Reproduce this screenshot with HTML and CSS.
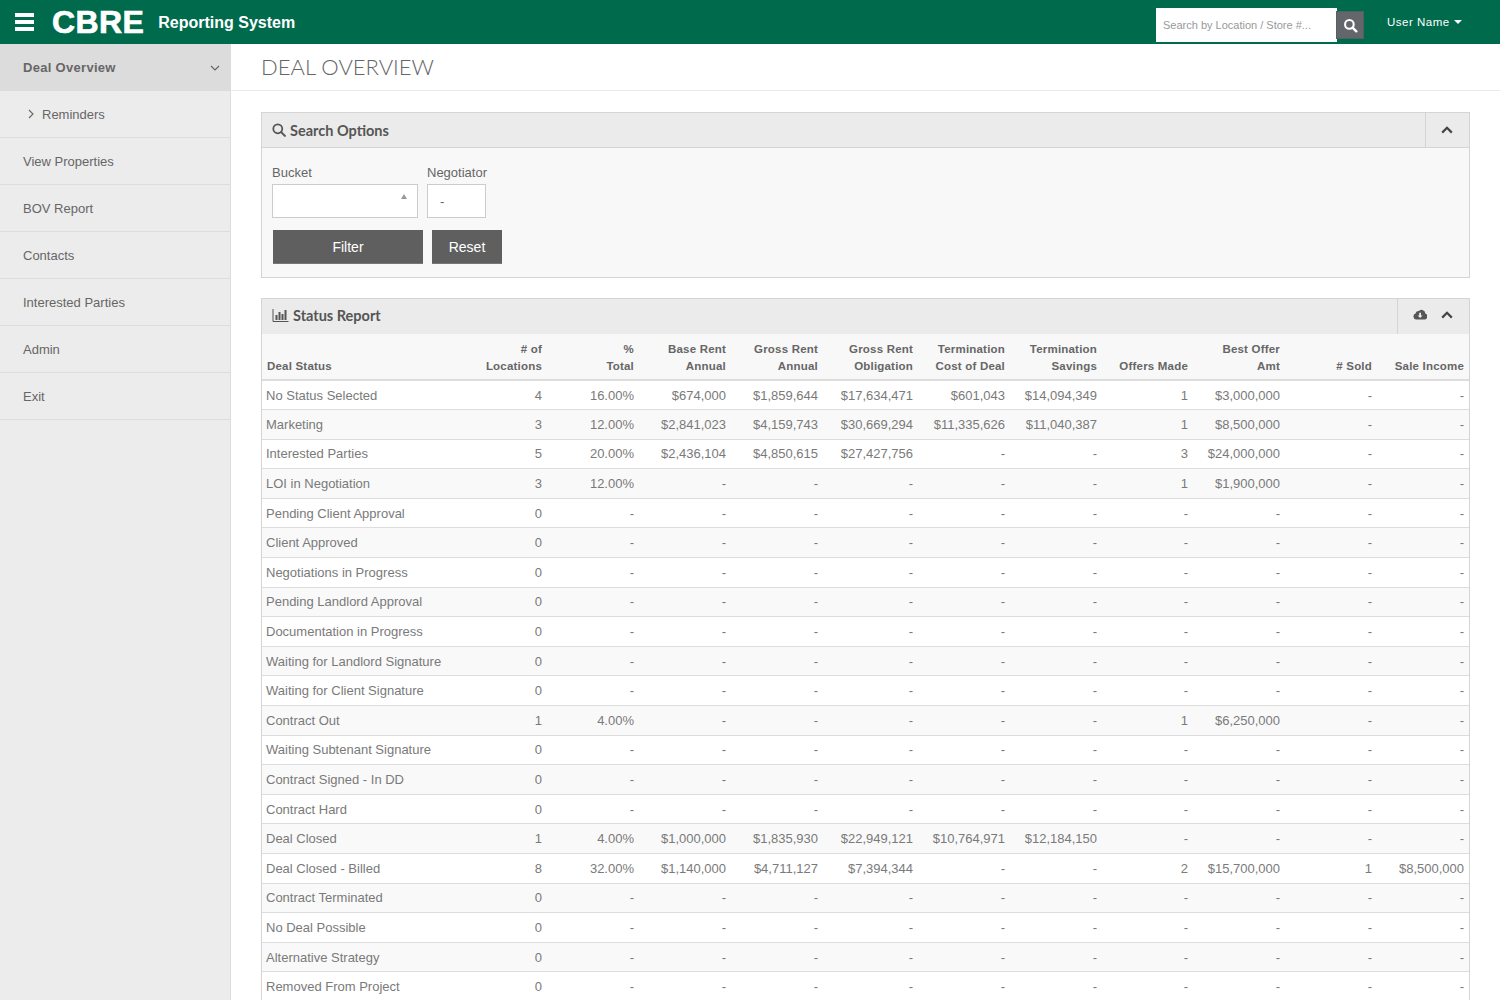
FILE: index.html
```html
<!DOCTYPE html>
<html lang="en">
  <head>
    <meta charset="UTF-8">
    <title>Deal Overview</title>
    <link rel="stylesheet" href="styles.css">
  </head>
  <body>
    <header class="topbar">
      <div class="burger"><span></span><span></span><span></span></div>
      <div class="logo">CBRE</div>
      <div class="app-name">Reporting System</div>
      <div class="top-search">
        <input class="top-search-input" type="text" placeholder="Search by Location / Store #...">
        <button class="top-search-btn">
          <svg width="15" height="15" viewBox="0 0 16 16"><circle cx="6.8" cy="6.8" r="4.6" fill="none" stroke="#fff" stroke-width="2.2"/><path d="M10.2 10.2L14.2 14.2" stroke="#fff" stroke-width="2.6" stroke-linecap="round"/></svg>
        </button>
      </div>
      <div class="user-menu">User Name <span class="caret"></span></div>
    </header>

    <div class="layout">
      <nav class="sidebar">
        <a class="nav-item nav-active">Deal Overview
          <svg class="nav-chevron" width="10" height="6" viewBox="0 0 10 6"><path d="M1 1L5 5L9 1" fill="none" stroke="#666" stroke-width="1.2"/></svg>
        </a>
        <a class="nav-item nav-sub">
          <svg width="6" height="10" viewBox="0 0 6 10"><path d="M1 1L5 5L1 9" fill="none" stroke="#666" stroke-width="1.1"/></svg>
          Reminders
        </a>
        <a class="nav-item">View Properties</a>
        <a class="nav-item">BOV Report</a>
        <a class="nav-item">Contacts</a>
        <a class="nav-item">Interested Parties</a>
        <a class="nav-item">Admin</a>
        <a class="nav-item">Exit</a>
      </nav>

      <main class="content">
        <h1 class="page-title">DEAL OVERVIEW</h1>

        <div class="content-body">
          <section class="panel">
            <div class="panel-head">
              <div class="panel-title">
                <svg width="14" height="14" viewBox="0 0 15 15"><circle cx="6.2" cy="6.2" r="4.8" fill="none" stroke="#555" stroke-width="1.9"/><path d="M9.8 9.8L13.8 13.8" stroke="#555" stroke-width="2.2" stroke-linecap="round"/></svg>
                Search Options
              </div>
              <div class="panel-tools tools-search">
                <svg width="12" height="8" viewBox="0 0 12 8"><path d="M1.2 6.6L6 1.8L10.8 6.6" fill="none" stroke="#444" stroke-width="2.2"/></svg>
              </div>
            </div>
            <div class="panel-body">
              <div class="filter-fields">
                <div class="field">
                  <label class="field-label">Bucket</label>
                  <div class="field-box box-bucket"><span class="up-arrow"></span></div>
                </div>
                <div class="field">
                  <label class="field-label">Negotiator</label>
                  <div class="field-box box-negotiator">-</div>
                </div>
              </div>
              <div class="filter-buttons">
                <button class="btn btn-filter">Filter</button>
                <button class="btn btn-reset">Reset</button>
              </div>
            </div>
          </section>

          <section class="panel panel-report">
            <div class="panel-head">
              <div class="panel-title">
                <svg width="17" height="13" viewBox="0 0 16 13"><path d="M0.5 0V12.5H16" fill="none" stroke="#555" stroke-width="1"/><path d="M3 6h2v5H3zM6 3h2v8H6zM9 5h2v6H9zM12 1h2v10h-2z" fill="#555"/></svg>
                Status Report
              </div>
              <div class="panel-tools tools-report">
                <svg width="14" height="11" viewBox="0 0 14 11"><path d="M3.4 10.6A3.1 3.1 0 0 1 2.5 4.6 3 3 0 0 1 6 2.1 3.6 3.6 0 0 1 12.3 4.6 3.1 3.1 0 0 1 11 10.6Z" fill="#555"/><path d="M6.2 3.8h1.8v2.6h1.6L7.1 9 4.6 6.4h1.6z" fill="#ebebeb"/></svg>
                <svg width="12" height="8" viewBox="0 0 12 8"><path d="M1.2 6.6L6 1.8L10.8 6.6" fill="none" stroke="#444" stroke-width="2.2"/></svg>
              </div>
            </div>
            <table class="report">
              <thead>
                <tr>
                  <th>Deal Status</th><th># of<br>Locations</th><th>%<br>Total</th><th>Base Rent<br>Annual</th><th>Gross Rent<br>Annual</th><th>Gross Rent<br>Obligation</th><th>Termination<br>Cost of Deal</th><th>Termination<br>Savings</th><th>Offers Made</th><th>Best Offer<br>Amt</th><th># Sold</th><th>Sale Income</th>
                </tr>
              </thead>
              <tbody>
                <tr><td>No Status Selected</td><td>4</td><td>16.00%</td><td>$674,000</td><td>$1,859,644</td><td>$17,634,471</td><td>$601,043</td><td>$14,094,349</td><td>1</td><td>$3,000,000</td><td>-</td><td>-</td></tr>
                <tr><td>Marketing</td><td>3</td><td>12.00%</td><td>$2,841,023</td><td>$4,159,743</td><td>$30,669,294</td><td>$11,335,626</td><td>$11,040,387</td><td>1</td><td>$8,500,000</td><td>-</td><td>-</td></tr>
                <tr><td>Interested Parties</td><td>5</td><td>20.00%</td><td>$2,436,104</td><td>$4,850,615</td><td>$27,427,756</td><td>-</td><td>-</td><td>3</td><td>$24,000,000</td><td>-</td><td>-</td></tr>
                <tr><td>LOI in Negotiation</td><td>3</td><td>12.00%</td><td>-</td><td>-</td><td>-</td><td>-</td><td>-</td><td>1</td><td>$1,900,000</td><td>-</td><td>-</td></tr>
                <tr><td>Pending Client Approval</td><td>0</td><td>-</td><td>-</td><td>-</td><td>-</td><td>-</td><td>-</td><td>-</td><td>-</td><td>-</td><td>-</td></tr>
                <tr><td>Client Approved</td><td>0</td><td>-</td><td>-</td><td>-</td><td>-</td><td>-</td><td>-</td><td>-</td><td>-</td><td>-</td><td>-</td></tr>
                <tr><td>Negotiations in Progress</td><td>0</td><td>-</td><td>-</td><td>-</td><td>-</td><td>-</td><td>-</td><td>-</td><td>-</td><td>-</td><td>-</td></tr>
                <tr><td>Pending Landlord Approval</td><td>0</td><td>-</td><td>-</td><td>-</td><td>-</td><td>-</td><td>-</td><td>-</td><td>-</td><td>-</td><td>-</td></tr>
                <tr><td>Documentation in Progress</td><td>0</td><td>-</td><td>-</td><td>-</td><td>-</td><td>-</td><td>-</td><td>-</td><td>-</td><td>-</td><td>-</td></tr>
                <tr><td>Waiting for Landlord Signature</td><td>0</td><td>-</td><td>-</td><td>-</td><td>-</td><td>-</td><td>-</td><td>-</td><td>-</td><td>-</td><td>-</td></tr>
                <tr><td>Waiting for Client Signature</td><td>0</td><td>-</td><td>-</td><td>-</td><td>-</td><td>-</td><td>-</td><td>-</td><td>-</td><td>-</td><td>-</td></tr>
                <tr><td>Contract Out</td><td>1</td><td>4.00%</td><td>-</td><td>-</td><td>-</td><td>-</td><td>-</td><td>1</td><td>$6,250,000</td><td>-</td><td>-</td></tr>
                <tr><td>Waiting Subtenant Signature</td><td>0</td><td>-</td><td>-</td><td>-</td><td>-</td><td>-</td><td>-</td><td>-</td><td>-</td><td>-</td><td>-</td></tr>
                <tr><td>Contract Signed - In DD</td><td>0</td><td>-</td><td>-</td><td>-</td><td>-</td><td>-</td><td>-</td><td>-</td><td>-</td><td>-</td><td>-</td></tr>
                <tr><td>Contract Hard</td><td>0</td><td>-</td><td>-</td><td>-</td><td>-</td><td>-</td><td>-</td><td>-</td><td>-</td><td>-</td><td>-</td></tr>
                <tr><td>Deal Closed</td><td>1</td><td>4.00%</td><td>$1,000,000</td><td>$1,835,930</td><td>$22,949,121</td><td>$10,764,971</td><td>$12,184,150</td><td>-</td><td>-</td><td>-</td><td>-</td></tr>
                <tr><td>Deal Closed - Billed</td><td>8</td><td>32.00%</td><td>$1,140,000</td><td>$4,711,127</td><td>$7,394,344</td><td>-</td><td>-</td><td>2</td><td>$15,700,000</td><td>1</td><td>$8,500,000</td></tr>
                <tr><td>Contract Terminated</td><td>0</td><td>-</td><td>-</td><td>-</td><td>-</td><td>-</td><td>-</td><td>-</td><td>-</td><td>-</td><td>-</td></tr>
                <tr><td>No Deal Possible</td><td>0</td><td>-</td><td>-</td><td>-</td><td>-</td><td>-</td><td>-</td><td>-</td><td>-</td><td>-</td><td>-</td></tr>
                <tr><td>Alternative Strategy</td><td>0</td><td>-</td><td>-</td><td>-</td><td>-</td><td>-</td><td>-</td><td>-</td><td>-</td><td>-</td><td>-</td></tr>
                <tr><td>Removed From Project</td><td>0</td><td>-</td><td>-</td><td>-</td><td>-</td><td>-</td><td>-</td><td>-</td><td>-</td><td>-</td><td>-</td></tr>
              </tbody>
            </table>
          </section>
        </div>
      </main>
    </div>
  </body>
</html>
```

FILE: styles.css
```css
* {
  margin: 0;
  padding: 0;
  box-sizing: border-box;
}

html, body {
  height: 100%;
  overflow: hidden;
}

body {
  display: flex;
  flex-direction: column;
  font-family: "Liberation Sans", Arial, sans-serif;
  font-size: 13px;
  color: #666;
  background-color: #fff;
}

/* top bar */
.topbar {
  flex: 0 0 44px;
  display: flex;
  align-items: center;
  background-color: #006a4d;
  color: #fff;
}

.burger {
  display: flex;
  flex-direction: column;
  gap: 3px;
  width: 19px;
  margin-left: 15px;
}

.burger span {
  display: block;
  height: 4px;
  background-color: #fff;
}

.logo {
  margin-left: 18px;
  font-size: 32px;
  font-weight: bold;
  line-height: 44px;
  letter-spacing: 0.4px;
  -webkit-text-stroke: 0.7px #fff;
}

.app-name {
  margin-left: 14px;
  margin-top: 1px;
  font-size: 16px;
  font-weight: bold;
}

.top-search {
  display: flex;
  align-items: center;
  margin-left: auto;
}

.top-search-input {
  width: 181px;
  height: 34px;
  margin-top: 6px;
  padding: 0 7px;
  border: none;
  outline: none;
  background-color: #fff;
  font-family: inherit;
  font-size: 11px;
}

.top-search-input::placeholder {
  color: #999;
}

.top-search-btn {
  display: flex;
  align-items: center;
  justify-content: center;
  width: 28px;
  height: 28px;
  margin-left: -1px;
  margin-top: 6px;
  border: 1px solid #555e60;
  background-color: #63666a;
}

.user-menu {
  width: 136px;
  padding-left: 23px;
  font-size: 11.5px;
  letter-spacing: 0.5px;
}

.caret {
  display: inline-block;
  margin-left: 1px;
  vertical-align: 2px;
  border-top: 4px solid #fff;
  border-left: 4px solid transparent;
  border-right: 4px solid transparent;
}

/* page layout */
.layout {
  flex: 1;
  display: flex;
  min-height: 0;
}

.sidebar {
  flex: 0 0 231px;
  background-color: #ececec;
  border-right: 1px solid #ddd;
}

.nav-item {
  display: flex;
  align-items: center;
  height: 47px;
  padding-left: 23px;
  border-bottom: 1px solid #ddd;
  color: #666;
}

.nav-active {
  justify-content: space-between;
  padding-right: 10px;
  background-color: #dcdcdc;
  border-bottom: none;
  font-weight: bold;
  letter-spacing: 0.3px;
}

.nav-sub {
  gap: 8px;
  padding-left: 28px;
}

.content {
  flex: 1;
  min-width: 0;
}

.page-title {
  height: 47px;
  padding-left: 30px;
  border-bottom: 1px solid #eaeaea;
  font-family: Lato, sans-serif;
  font-size: 22px;
  font-weight: 300;
  line-height: 45px;
  color: #666;
}

.content-body {
  padding: 21px 30px 0;
}

/* panels */
.panel {
  border: 1px solid #d4d4d4;
  background-color: #f8f8f8;
}

.panel-report {
  margin-top: 20px;
}

.panel-head {
  display: flex;
  justify-content: space-between;
  height: 35px;
  background-color: #ebebeb;
  border-bottom: 1px solid #d4d4d4;
}

.panel-title {
  display: flex;
  align-items: center;
  gap: 4px;
  padding-left: 10px;
  font-family: Lato, sans-serif;
  font-size: 14.5px;
  font-weight: 700;
  color: #555;
}

.panel-report .panel-head {
  border-bottom: none;
}

.panel-report .panel-title {
  padding-bottom: 2px;
}

.panel-tools {
  display: flex;
  align-items: center;
  justify-content: center;
  border-left: 1px solid #d4d4d4;
  padding-right: 2px;
}

.tools-search {
  width: 44px;
}

.tools-report {
  width: 72px;
  gap: 14px;
  padding-bottom: 4px;
}

.panel-body {
  height: 129px;
  padding: 16px 10px 0;
}

.filter-fields {
  display: flex;
  gap: 9px;
}

.field-label {
  display: block;
  height: 20px;
  line-height: 17px;
  color: #666;
}

.field-box {
  position: relative;
  height: 34px;
  border: 1px solid #ccc;
  background-color: #fff;
}

.box-bucket {
  width: 146px;
}

.box-negotiator {
  width: 59px;
  padding-left: 12px;
  line-height: 34px;
}

.up-arrow {
  position: absolute;
  top: 9px;
  right: 10px;
  border-bottom: 5px solid #999;
  border-left: 3px solid transparent;
  border-right: 3px solid transparent;
}

.filter-buttons {
  display: flex;
  gap: 9px;
  margin: 12px 0 0 1px;
}

.btn {
  height: 34px;
  border: none;
  border-bottom: 1px solid #777;
  background-color: #5f5f5f;
  color: #fff;
  font-family: inherit;
  font-size: 14px;
}

.btn-filter {
  width: 150px;
}

.btn-reset {
  width: 70px;
}

/* report table */
.report {
  width: 100%;
  table-layout: fixed;
  border-collapse: collapse;
}

.report th {
  height: 46px;
  padding: 0 5px 4px;
  border-bottom: 2px solid #ddd;
  font-size: 11.5px;
  line-height: 17px;
  letter-spacing: 0.2px;
  text-align: right;
  vertical-align: bottom;
  color: #666;
}

.report th:nth-child(1) { width: 190px; text-align: left; }
.report th:nth-child(2) { width: 95px; }
.report th:nth-child(3),
.report th:nth-child(4),
.report th:nth-child(5),
.report th:nth-child(7),
.report th:nth-child(8),
.report th:nth-child(10),
.report th:nth-child(11),
.report th:nth-child(12) { width: 92px; }
.report th:nth-child(6) { width: 95px; }
.report th:nth-child(9) { width: 91px; }

.report td {
  height: 29.6px;
  padding: 0 5px;
  border-top: 1px solid #ddd;
  text-align: right;
  white-space: nowrap;
  color: #7a7a7a;
}

.report td:first-child {
  padding-left: 4px;
  text-align: left;
}

.report tbody tr:first-child td {
  border-top: none;
}

.report tbody tr:nth-child(odd) {
  background-color: #fff;
}

.report tbody tr:nth-child(even) {
  background-color: #f9f9f9;
}
```
